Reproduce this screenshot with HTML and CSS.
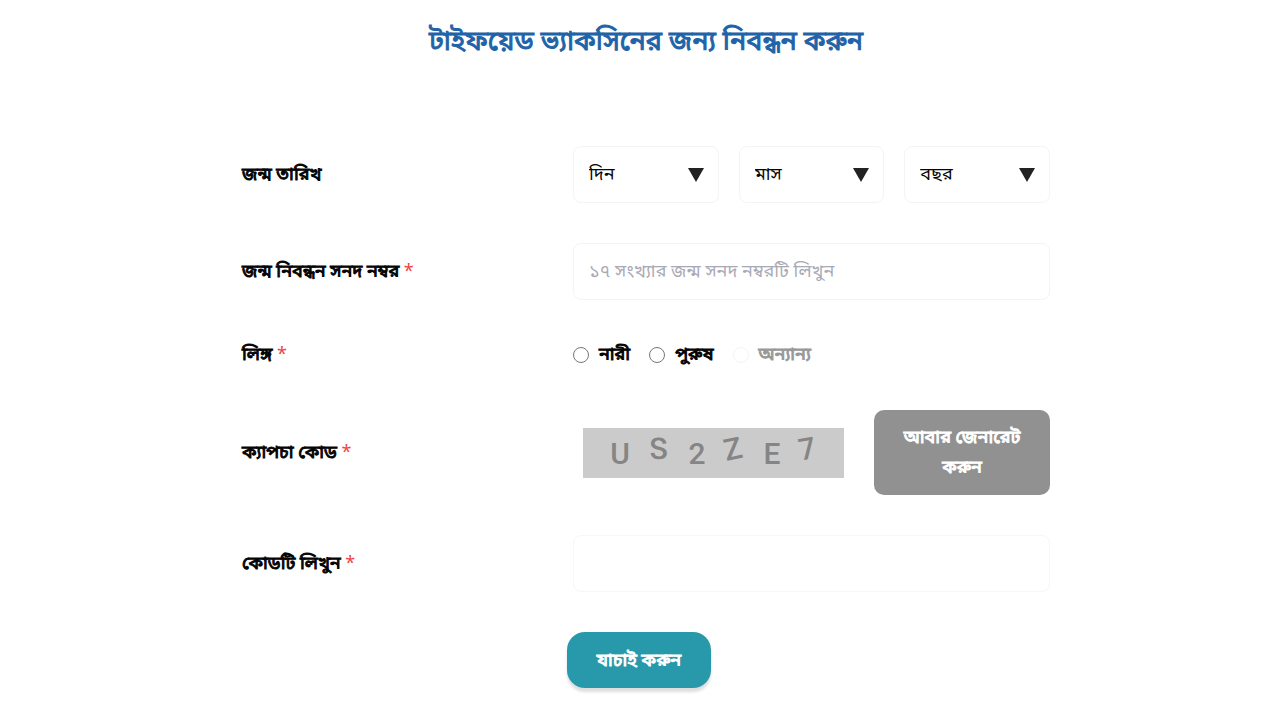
FILE: index.html
```html
<!DOCTYPE html>
<html lang="bn">
<head>
<meta charset="utf-8">
<meta name="viewport" content="width=device-width, initial-scale=1">
<title>টাইফয়েড ভ্যাকসিনের জন্য নিবন্ধন করুন</title>
<link rel="stylesheet" href="styles.css">
</head>
<body>
<main class="page">
  <h1 class="title">টাইফয়েড ভ্যাকসিনের জন্য নিবন্ধন করুন</h1>
  <form class="form">
    <div class="row" role="group" aria-labelledby="dob">
      <span class="label" id="dob">জন্ম তারিখ</span>
      <div class="dates">
        <select class="control select" aria-label="দিন"><option>দিন</option></select>
        <select class="control select" aria-label="মাস"><option>মাস</option></select>
        <select class="control select" aria-label="বছর"><option>বছর</option></select>
      </div>
    </div>
    <div class="row">
      <label class="label" for="brn">জন্ম নিবন্ধন সনদ নম্বর <span class="req">*</span></label>
      <input class="control" id="brn" type="text" placeholder="১৭ সংখ্যার জন্ম সনদ নম্বরটি লিখুন">
    </div>
    <div class="row" role="radiogroup" aria-labelledby="gender">
      <span class="label" id="gender">লিঙ্গ <span class="req">*</span></span>
      <div class="radios">
        <label class="choice"><input class="radio" type="radio" name="gender"><span class="choice-text">নারী</span></label>
        <label class="choice"><input class="radio" type="radio" name="gender"><span class="choice-text">পুরুষ</span></label>
        <label class="choice choice-off"><input class="radio" type="radio" name="gender" disabled><span class="choice-text">অন্যান্য</span></label>
      </div>
    </div>
    <div class="row">
      <span class="label">ক্যাপচা কোড <span class="req">*</span></span>
      <div class="captcha-line">
        <svg class="captcha" viewBox="0 0 261 50" role="img" aria-label="ক্যাপচা">
          <rect width="261" height="50" fill="#cbcbcb"/>
          <g class="captcha-text" text-anchor="middle">
            <text x="37" y="36">U</text>
            <text transform="translate(76 31) rotate(-3)">S</text>
            <text x="114" y="36">2</text>
            <text transform="translate(152 31) rotate(-12)">Z</text>
            <text x="189" y="36">E</text>
            <text transform="translate(226 31) rotate(-10)">7</text>
          </g>
        </svg>
        <button class="regen" type="button">আবার জেনারেট করুন</button>
      </div>
    </div>
    <div class="row">
      <label class="label" for="code">কোডটি লিখুন <span class="req">*</span></label>
      <input class="control control-code" id="code" type="text">
    </div>
    <button class="submit" type="submit">যাচাই করুন</button>
  </form>
</main>
</body>
</html>
```
FILE: styles.css
```css
* { box-sizing: border-box; }
body { margin: 0; background: #fff; color: #050505; font-family: "Noto Sans", "Noto Sans Bengali", sans-serif; font-size: 18px; }
.page { max-width: 820px; margin: 0 auto; padding: 18px 0 24px 12px; }
.title { margin: 0 0 84px; color: #1f63a8; font-size: 27px; font-weight: 400; -webkit-text-stroke: 1px; line-height: 44px; text-align: center; }
.form { display: flex; flex-direction: column; }
.row { display: grid; grid-template-columns: 331px 1fr; align-items: center; margin-bottom: 40px; }
.label { padding-bottom: 3px; -webkit-text-stroke: 1px; line-height: 27px; }
.req { color: #ef4444; -webkit-text-stroke: 0; }
.dates { display: grid; grid-template-columns: repeat(3, 1fr); gap: 20px; }
.control { width: 100%; height: 57px; padding: 0 15px 3px; border: 1px solid #f4f4f4; border-radius: 8px; background: #fff; color: #050505; font: inherit; }
.control-code { border-color: #f7f7f7; }
.control::placeholder { color: #a9a9b5; opacity: 1; }
.select { appearance: none; background: url("data:image/svg+xml,%3Csvg xmlns='http://www.w3.org/2000/svg' width='16' height='14'%3E%3Cpath d='M0 0h16L8 14z' fill='%23222'/%3E%3C/svg%3E") no-repeat right 14px center; }
.radios { display: flex; gap: 19px; }
.choice { display: flex; align-items: center; gap: 10px; }
.choice-text { padding-bottom: 3px; -webkit-text-stroke: 1px; line-height: 27px; }
.choice-off { color: #999; }
.radio { width: 16px; height: 16px; margin: 0; }
.radio:disabled { appearance: none; border: 1px solid #f4f4f4; border-radius: 50%; }
.captcha-line { display: flex; gap: 30px; align-items: center; padding-left: 10px; }
.captcha { width: 261px; height: 50px; flex: none; }
.captcha-text { font: 500 30px Roboto, sans-serif; fill: #858585; }
.regen { flex: 1; min-height: 85px; padding: 0 24px 3px; border: 0; border-radius: 10px; background: #919191; color: #fff; font: inherit; -webkit-text-stroke: 1px; line-height: 30px; }
.submit { align-self: center; margin-right: 14px; padding: 0 28px; min-height: 56px; min-width: 144px; border: 0; border-radius: 18px; background: #2899aa; color: #fff; font: inherit; -webkit-text-stroke: 1px; box-shadow: 0 4px 3px #dedede; }
```
